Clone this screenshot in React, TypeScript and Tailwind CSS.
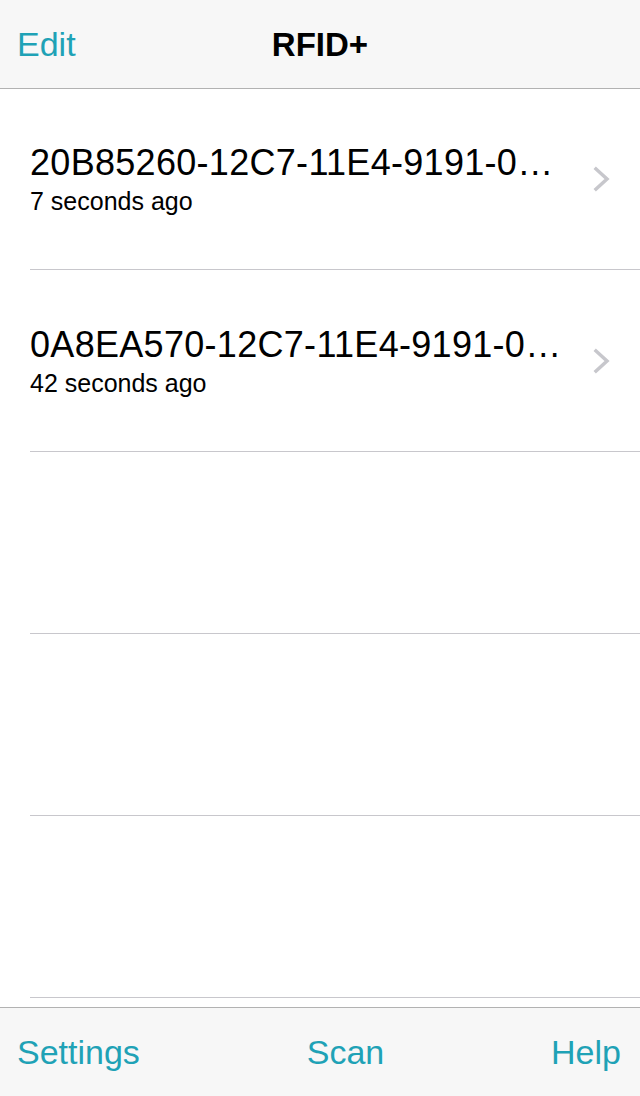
import { ChevronRight } from 'lucide-react';

interface Scan {
  id: string;
  label: string;
  ago: string;
}

const scans: Scan[] = [
  { id: '20B85260-12C7-11E4-9191-0800200C9A66', label: '20B85260-12C7-11E4-9191-0…', ago: '7 seconds ago' },
  { id: '0A8EA570-12C7-11E4-9191-0800200C9A66', label: '0A8EA570-12C7-11E4-9191-0…', ago: '42 seconds ago' },
];

const EMPTY_ROWS = 4;

function Chevron() {
  return (
    <svg width="17" height="26" viewBox="0 0 17 26" className="shrink-0">
      <polyline points="3,3 14,13 3,23" fill="none" stroke="#c7c7cc" strokeWidth="3.5" strokeLinecap="square" />
    </svg>
  );
}

export default function App() {
  const rowCount = scans.length + EMPTY_ROWS;

  return (
    <div className="flex h-[1096px] w-[640px] flex-col overflow-hidden bg-white font-['Liberation_Sans',Arial,sans-serif] text-black">
      {/* Navigation bar */}
      <header className="relative flex h-[89px] shrink-0 items-center border-b border-[#b2b2b2] bg-[#f7f7f7] px-[17px]">
        <button className="text-[34px] leading-none text-[#1fa2b6]">Edit</button>
        <h1 className="absolute left-1/2 -translate-x-1/2 text-[33px] font-bold leading-none">RFID+</h1>
      </header>

      {/* Scan list */}
      <div className="flex-1 overflow-hidden">
        {Array.from({ length: rowCount + 1 }).map((_, i) => {
          const scan = scans[i];
          return (
            <div key={scan ? scan.id : `empty-${i}`} className="pl-[30px]">
              <div
                className={`flex items-center border-b border-[#c8c7cc] pr-[30px] ${
                  i === 0 ? 'h-[181px]' : 'h-[182px]'
                }`}
              >
                {scan && (
                  <>
                    <div className="flex-1 pt-[4px]">
                      <p className="whitespace-nowrap text-[36px] leading-[40px] tracking-[0.3px]">{scan.label}</p>
                      <p className="whitespace-nowrap text-[25px] leading-[36px]">{scan.ago}</p>
                    </div>
                    <Chevron />
                  </>
                )}
              </div>
            </div>
          );
        })}
      </div>

      {/* Toolbar */}
      <footer className="flex h-[89px] shrink-0 items-center justify-between border-t border-[#b2b2b2] bg-[#f7f7f7] pl-[17px] pr-[19px] text-[34px] leading-none text-[#1fa2b6]">
        <button>Settings</button>
        <button>Scan</button>
        <button>Help</button>
      </footer>
    </div>
  );
}
